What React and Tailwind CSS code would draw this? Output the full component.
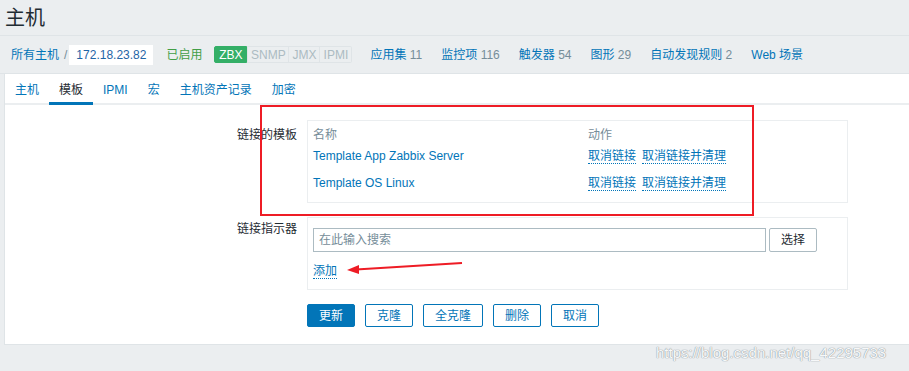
import React from "react";

const font = "font-['Liberation_Sans','Noto_Sans_CJK_SC',sans-serif]";

function NavLink({ label, count }) {
  return (
    <span className="px-[9px] whitespace-nowrap">
      <span className="text-[#0275b8]">{label}</span>
      {count !== undefined && <span className="text-[#768d99]"> {count}</span>}
    </span>
  );
}

function Dotted({ children }) {
  return (
    <span className="text-[#0275b8] border-b border-dotted border-[#0275b8] leading-[14px]">{children}</span>
  );
}

function Btn({ children, primary, w }) {
  return (
    <button
      className={
        "h-[23px] rounded-[2px] border text-[12px] leading-none " +
        w +
        (primary
          ? " bg-[#0275b8] border-[#0275b8] text-white"
          : " bg-white border-[#0275b8] text-[#0275b8]")
      }
    >
      {children}
    </button>
  );
}

export default function App() {
  return (
    <div className={"relative w-[909px] h-[371px] overflow-hidden bg-[#ebeef0] text-[12px] text-[#1f2c33] " + font}>
      {/* Title */}
      <div className="h-[36px] border-b border-[#dfe4e7] flex items-center pl-[5px]">
        <span className="text-[20px] leading-none text-[#1f2c33]">主机</span>
      </div>

      {/* Breadcrumb / nav */}
      <div className="h-[38px] flex items-center pl-[11px] border-b border-[#dfe4e7]">
        <span className="text-[#0275b8]">所有主机</span>
        <span className="text-[#768d99] ml-[5px]">/</span>
        <span className="ml-[2px] bg-white h-[20px] px-[7px] flex items-center text-[#1f65a6]">172.18.23.82</span>
        <span className="ml-[13px] text-[#429e47]">已启用</span>
        <span className="ml-[12px] flex items-center">
          <span className="h-[17px] w-[33px] justify-center bg-[#34af67] text-white rounded-l-[2px] flex items-center border border-[#34af67]">ZBX</span>
          <span className="h-[17px] w-[42px] justify-center border border-[#dfe4e7] text-[#acbbc2] flex items-center">SNMP</span>
          <span className="h-[17px] w-[31px] justify-center border border-l-0 border-[#dfe4e7] text-[#acbbc2] flex items-center">JMX</span>
          <span className="h-[17px] w-[32px] justify-center border border-l-0 border-[#dfe4e7] text-[#acbbc2] rounded-r-[2px] flex items-center">IPMI</span>
        </span>
        <span className="ml-[9px] flex items-center">
          <NavLink label="应用集" count="11" />
          <span className="w-[1px]" />
          <NavLink label="监控项" count="116" />
          <span className="w-[1px]" />
          <NavLink label="触发器" count="54" />
          <span className="w-[1px]" />
          <NavLink label="图形" count="29" />
          <span className="w-[1px]" />
          <NavLink label="自动发现规则" count="2" />
          <span className="w-[1px]" />
          <NavLink label="Web 场景" />
        </span>
      </div>

      {/* White panel */}
      <div className="ml-[4px] w-[910px] bg-white border-l border-b border-[#dfe4e7]">
        {/* Tabs */}
        <div className="h-[31px] flex border-b-2 border-[#ebeef0]">
          {["主机", "模板", "IPMI", "宏", "主机资产记录", "加密"].map((t, i) => (
            <div
              key={t}
              className={
                "px-[10px] flex items-center h-[31px] " +
                (i === 1 ? "text-[#1f2c33] border-b-[3px] border-[#0275b8] mb-[-2px] pt-[3px]" : "text-[#0275b8] pt-[1px]")
              }
            >
              {t}
            </div>
          ))}
        </div>

        {/* Form */}
        <div className="pt-[15px] pb-[17px]">
          {/* Row 1 */}
          <div className="flex">
            <div className="w-[292px] text-right pt-[8px] leading-[14px]">链接的模板</div>
            <div className="ml-[10px] w-[541px] border border-[#ebeef0] px-[5px] pt-[3px] pb-[8px]">
              <div className="flex h-[21px] items-center text-[#768d99]">
                <span className="w-[275px]">名称</span>
                <span>动作</span>
              </div>
              <div className="flex h-[22px] items-center">
                <span className="w-[275px] text-[#0275b8]">Template App Zabbix Server</span>
                <Dotted>取消链接</Dotted>
                <span className="w-[6px]" />
                <Dotted>取消链接并清理</Dotted>
              </div>
              <div className="flex h-[22px] items-center mt-[5px]">
                <span className="w-[275px] text-[#0275b8]">Template OS Linux</span>
                <Dotted>取消链接</Dotted>
                <span className="w-[6px]" />
                <Dotted>取消链接并清理</Dotted>
              </div>
            </div>
          </div>

          {/* Row 2 */}
          <div className="flex mt-[14px]">
            <div className="w-[292px] text-right pt-[5px] leading-[14px]">链接指示器</div>
            <div className="ml-[10px] w-[541px] border border-[#ebeef0] px-[5px] pt-[10px] pb-[10px]">
              <div className="flex">
                <div className="w-[453px] h-[24px] border border-[#acbbc2] flex items-center px-[5px] text-[#768d99]">
                  在此输入搜索
                </div>
                <button className="ml-[3px] w-[48px] h-[24px] border border-[#acbbc2] rounded-[2px] bg-white text-[#1f2c33] text-[12px]">
                  选择
                </button>
              </div>
              <div className="mt-[11px] h-[16px] flex items-center">
                <Dotted>添加</Dotted>
              </div>
            </div>
          </div>

          {/* Buttons */}
          <div className="flex mt-[14px] pl-[302px] gap-[10px]">
            <Btn primary w="w-[48px]">更新</Btn>
            <Btn w="w-[48px]">克隆</Btn>
            <Btn w="w-[60px]">全克隆</Btn>
            <Btn w="w-[48px]">删除</Btn>
            <Btn w="w-[48px]">取消</Btn>
          </div>
        </div>
      </div>

      {/* Annotation: red rectangle */}
      <div className="absolute left-[260px] top-[105px] w-[494px] h-[111px] border-2 border-[#ee1c25] pointer-events-none" />

      {/* Annotation: red arrow */}
      <svg className="absolute left-0 top-0 pointer-events-none" width="909" height="371">
        <line x1="462" y1="263" x2="356" y2="269.5" stroke="#ee1c25" strokeWidth="2" />
        <polygon points="347,270 359,265 359,274" fill="#ee1c25" />
      </svg>

      {/* Watermark */}
      <div className="absolute left-[656px] top-[342px] text-[15px] text-[#f7f8f9] [text-shadow:0_0_1px_#8c969c,0_0_1px_#8c969c]">
        https://blog.csdn.net/qq_42295733
      </div>
    </div>
  );
}
